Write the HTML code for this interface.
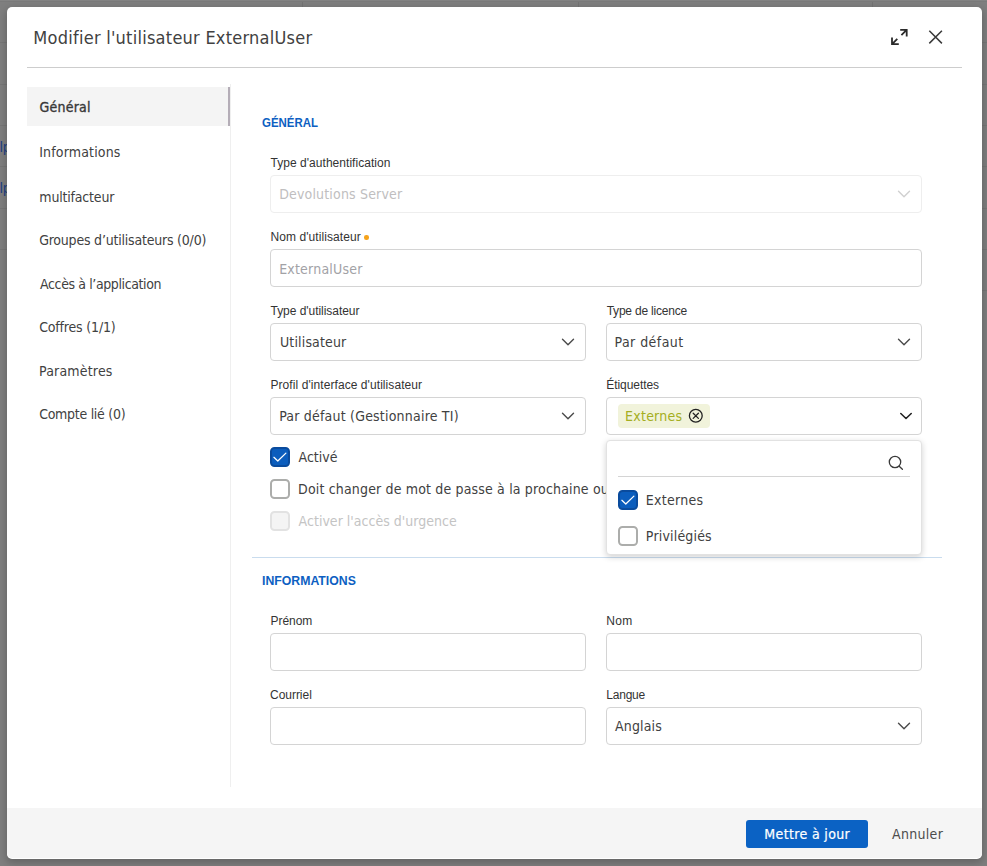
<!DOCTYPE html>
<html lang="fr"><head><meta charset="utf-8"><title>Modifier l'utilisateur ExternalUser</title>
<style>
html,body{margin:0;padding:0}
body{width:987px;height:866px;position:relative;overflow:hidden;background:#7f7f7f;font-family:"Liberation Sans",sans-serif}
.a,.t,.in,.cb,.ln{position:absolute}
.t{white-space:nowrap;display:block}
.in{box-sizing:border-box;border:1px solid #d4d4d4;border-radius:4px;background:#fff}
.in.dis{border-color:#eeeeee}
.ln{background:#ccc}
.cb{width:20px;height:20px;box-sizing:border-box;border:2px solid #acadab;border-radius:4.5px;background:#fff}
.cb.on{border-color:#0a4b9d;background:#0b5dbd}
.cb.on svg{position:absolute;left:-2px;top:-2px}
.cb.dis{border-color:#e2e2e2;background:#f4f4f4}
#modal{position:absolute;left:7px;top:7px;width:975px;height:852px;background:#fff;border-radius:5px;box-shadow:0 3px 9px 1px rgba(0,0,0,.22)}
#foot{position:absolute;left:7px;top:808px;width:975px;height:50px;background:#f5f5f5;border-radius:0 0 5px 5px}
#panel{position:absolute;left:606px;top:440px;width:316px;height:115px;box-sizing:border-box;background:#fff;border:1px solid #e2e2e2;border-radius:4px;box-shadow:0 2px 6px rgba(0,0,0,.18)}
#clip{position:absolute;left:0;top:470px;width:606px;height:40px;overflow:hidden}
</style></head><body>

<div class="ln" style="left:0;top:42px;width:987px;height:1px;background:#777"></div>
<div class="ln" style="left:0;top:84px;width:987px;height:1px;background:#777"></div>
<div class="ln" style="left:0;top:125px;width:987px;height:1px;background:#777"></div>
<div class="ln" style="left:0;top:166px;width:987px;height:1px;background:#777"></div>
<div class="ln" style="left:0;top:208px;width:987px;height:1px;background:#777"></div>
<div class="ln" style="left:0;top:249px;width:987px;height:1px;background:#777"></div>
<div class="ln" style="left:982px;top:290px;width:5px;height:1px;background:#777"></div>
<div class="ln" style="left:0;top:0;width:987px;height:1px;background:#838383"></div>
<div class="ln" style="left:0;top:1px;width:987px;height:1px;background:#7a7a7a"></div>
<div class="ln" style="left:302px;top:2px;width:1px;height:6px;background:#747474"></div>
<div class="ln" style="left:578px;top:2px;width:1px;height:6px;background:#747474"></div>
<div class="ln" style="left:872px;top:2px;width:1px;height:6px;background:#747474"></div>
<span class="t" style="left:-8px;top:137px;font-size:14px;line-height:20px;color:#1f3f82">elp</span>
<span class="t" style="left:-8px;top:178px;font-size:14px;line-height:20px;color:#1f3f82">elp</span>
<div id="modal"></div><div id="foot"></div>
<div class="ln" style="left:27px;top:67px;width:935px;height:1px;background:#cdcdcd"></div>
<svg class="a" style="left:889px;top:27px" width="20" height="20" viewBox="0 0 20 20" fill="none" stroke="#2b2b2b" stroke-width="1.8" stroke-linecap="butt" stroke-linejoin="miter">
<path d="M11.2 2.8 H17.7 V9.6 M17.4 3.1 L12.4 8.1 M3 10.4 V17.2 H9.8 M3.3 16.9 L8.3 11.9"/></svg>
<svg class="a" style="left:926px;top:27px" width="20" height="20" viewBox="0 0 20 20" fill="none" stroke="#3a3a3a" stroke-width="1.5" stroke-linecap="butt">
<path d="M3.3 3.8 L15.9 16.4 M15.9 3.8 L3.3 16.4"/></svg>
<div class="a" style="left:27px;top:87px;width:203px;height:39px;background:#f4f4f4;box-sizing:border-box;border-right:2px solid #b4adb7"></div>
<div class="ln" style="left:230px;top:84px;width:1px;height:703px;background:#efefef"></div>
<div class="in dis" style="left:270px;top:175px;width:652px;height:38px;"></div>
<div class="in" style="left:270px;top:249px;width:652px;height:38px;"></div>
<div class="in" style="left:270px;top:323px;width:316px;height:38px;"></div>
<div class="in" style="left:606px;top:323px;width:316px;height:38px;"></div>
<div class="in" style="left:270px;top:397px;width:316px;height:38px;"></div>
<div class="in" style="left:606px;top:397px;width:316px;height:38px;"></div>
<div class="in" style="left:270px;top:633px;width:316px;height:38px;"></div>
<div class="in" style="left:606px;top:633px;width:316px;height:38px;"></div>
<div class="in" style="left:270px;top:707px;width:316px;height:38px;"></div>
<div class="in" style="left:606px;top:707px;width:316px;height:38px;"></div>
<svg class="a" style="left:896px;top:186px" width="16" height="16" viewBox="0 0 16 16"><path d="M2.5 5.25 L8 10.75 L13.5 5.25" fill="none" stroke="#d0d0d0" stroke-width="1.4" stroke-linecap="round" stroke-linejoin="round"/></svg>
<svg class="a" style="left:560px;top:334px" width="16" height="16" viewBox="0 0 16 16"><path d="M2.5 5.25 L8 10.75 L13.5 5.25" fill="none" stroke="#4a4a4a" stroke-width="1.4" stroke-linecap="round" stroke-linejoin="round"/></svg>
<svg class="a" style="left:896px;top:334px" width="16" height="16" viewBox="0 0 16 16"><path d="M2.5 5.25 L8 10.75 L13.5 5.25" fill="none" stroke="#4a4a4a" stroke-width="1.4" stroke-linecap="round" stroke-linejoin="round"/></svg>
<svg class="a" style="left:560px;top:408px" width="16" height="16" viewBox="0 0 16 16"><path d="M2.5 5.25 L8 10.75 L13.5 5.25" fill="none" stroke="#4a4a4a" stroke-width="1.4" stroke-linecap="round" stroke-linejoin="round"/></svg>
<svg class="a" style="left:898px;top:408px" width="16" height="16" viewBox="0 0 16 16"><path d="M2.8 5.5 L8 10.5 L13.2 5.5" fill="none" stroke="#222" stroke-width="1.6" stroke-linecap="round" stroke-linejoin="round"/></svg>
<svg class="a" style="left:896px;top:718px" width="16" height="16" viewBox="0 0 16 16"><path d="M2.5 5.25 L8 10.75 L13.5 5.25" fill="none" stroke="#4a4a4a" stroke-width="1.4" stroke-linecap="round" stroke-linejoin="round"/></svg>
<div class="a" style="left:364px;top:235px;width:4.5px;height:4.5px;border-radius:50%;background:#f5a31c"></div>
<div class="a" style="left:618px;top:404px;width:92px;height:24px;border-radius:4px;background:#f1f3db"></div>
<svg class="a" style="left:688.3px;top:408.3px" width="16" height="16" viewBox="0 0 16 16" fill="none" stroke="#222" stroke-width="1.3" stroke-linecap="round">
<circle cx="7.8" cy="7.8" r="6.4"/><path d="M5.2 5.2 L10.4 10.4 M10.4 5.2 L5.2 10.4"/></svg>
<div class="cb on" style="left:270px;top:447px"><svg width="20" height="20" viewBox="0 0 20 20"><path d="M3.9 10.3 L7.8 14 L15.9 6.1" fill="none" stroke="#fff" stroke-width="1.25" stroke-linecap="round" stroke-linejoin="round"/></svg></div>
<div class="cb" style="left:270px;top:479px"></div>
<div class="cb dis" style="left:270px;top:511px"></div>
<div class="ln" style="left:252px;top:557px;width:690px;height:1px;background:#c9dcee"></div>
<div id="panel"></div>
<div class="ln" style="left:618px;top:476px;width:292px;height:1px;background:#d4d4d4"></div>
<svg class="a" style="left:887px;top:454px" width="18" height="18" viewBox="0 0 18 18" fill="none" stroke="#3a3a3a" stroke-width="1.3" stroke-linecap="round">
<circle cx="8" cy="8" r="5.7"/><path d="M12.2 12.2 L15.4 15.2"/></svg>
<div class="cb on" style="left:618px;top:490px"><svg width="20" height="20" viewBox="0 0 20 20"><path d="M3.9 10.3 L7.8 14 L15.9 6.1" fill="none" stroke="#fff" stroke-width="1.25" stroke-linecap="round" stroke-linejoin="round"/></svg></div>
<div class="cb" style="left:618px;top:526px"></div>
<div class="a" style="left:746px;top:820px;width:122px;height:28px;border-radius:3px;background:#0b62c4"></div>
<span class="t" id="title" style="left:33.36px;top:23.77px;font-size:18px;line-height:27px;color:#414141;font-family:'DejaVu Sans Condensed', 'DejaVu Sans', sans-serif;letter-spacing:0.244px;">Modifier l'utilisateur ExternalUser</span>
<span class="t" id="s0" style="left:39.60px;top:96.66px;font-size:14px;line-height:21px;color:#383838;font-family:'DejaVu Sans Condensed', 'DejaVu Sans', sans-serif;letter-spacing:0.210px;-webkit-text-stroke:0.35px #383838;">Général</span>
<span class="t" id="s1" style="left:39.25px;top:141.66px;font-size:14px;line-height:21px;color:#414141;font-family:'DejaVu Sans Condensed', 'DejaVu Sans', sans-serif;letter-spacing:0.155px;">Informations</span>
<span class="t" id="s2" style="left:39.37px;top:186.66px;font-size:14px;line-height:21px;color:#414141;font-family:'DejaVu Sans Condensed', 'DejaVu Sans', sans-serif;letter-spacing:-0.190px;">multifacteur</span>
<span class="t" id="s3" style="left:39.13px;top:229.66px;font-size:14px;line-height:21px;color:#414141;font-family:'DejaVu Sans Condensed', 'DejaVu Sans', sans-serif;letter-spacing:-0.207px;">Groupes d’utilisateurs (0/0)</span>
<span class="t" id="s4" style="left:40.10px;top:273.66px;font-size:14px;line-height:21px;color:#414141;font-family:'DejaVu Sans Condensed', 'DejaVu Sans', sans-serif;letter-spacing:-0.395px;">Accès à l’application</span>
<span class="t" id="s5" style="left:39.13px;top:316.66px;font-size:14px;line-height:21px;color:#414141;font-family:'DejaVu Sans Condensed', 'DejaVu Sans', sans-serif;letter-spacing:-0.171px;">Coffres (1/1)</span>
<span class="t" id="s6" style="left:39.04px;top:360.66px;font-size:14px;line-height:21px;color:#414141;font-family:'DejaVu Sans Condensed', 'DejaVu Sans', sans-serif;letter-spacing:0.185px;">Paramètres</span>
<span class="t" id="s7" style="left:39.13px;top:403.66px;font-size:14px;line-height:21px;color:#414141;font-family:'DejaVu Sans Condensed', 'DejaVu Sans', sans-serif;letter-spacing:-0.278px;">Compte lié (0)</span>
<span class="t" id="h1" style="left:262.00px;top:112.50px;font-size:13px;line-height:20px;color:#0d5fc2;font-family:'Liberation Sans', sans-serif;font-weight:700;transform:scaleX(0.8801);transform-origin:0 0;">GÉNÉRAL</span>
<span class="t" id="h2" style="left:262.00px;top:570.50px;font-size:13px;line-height:20px;color:#0d5fc2;font-family:'Liberation Sans', sans-serif;font-weight:700;transform:scaleX(0.9443);transform-origin:0 0;">INFORMATIONS</span>
<span class="t" id="l0" style="left:270.55px;top:153.84px;font-size:12px;line-height:18px;color:#333;font-family:'Liberation Sans', sans-serif;letter-spacing:0.036px;">Type d'authentification</span>
<span class="t" id="l1" style="left:270.45px;top:227.84px;font-size:12px;line-height:18px;color:#333;font-family:'Liberation Sans', sans-serif;letter-spacing:0.076px;">Nom d'utilisateur</span>
<span class="t" id="l2" style="left:270.52px;top:301.84px;font-size:12px;line-height:18px;color:#333;font-family:'Liberation Sans', sans-serif;letter-spacing:-0.041px;">Type d'utilisateur</span>
<span class="t" id="l3" style="left:270.45px;top:375.84px;font-size:12px;line-height:18px;color:#333;font-family:'Liberation Sans', sans-serif;letter-spacing:0.075px;">Profil d'interface d'utilisateur</span>
<span class="t" id="l4" style="left:606.63px;top:301.84px;font-size:12px;line-height:18px;color:#333;font-family:'Liberation Sans', sans-serif;letter-spacing:-0.204px;">Type de licence</span>
<span class="t" id="l5" style="left:606.30px;top:375.84px;font-size:12px;line-height:18px;color:#333;font-family:'Liberation Sans', sans-serif;letter-spacing:-0.068px;">Étiquettes</span>
<span class="t" id="l6" style="left:270.45px;top:611.84px;font-size:12px;line-height:18px;color:#333;font-family:'Liberation Sans', sans-serif;letter-spacing:-0.020px;">Prénom</span>
<span class="t" id="l7" style="left:270.07px;top:685.84px;font-size:12px;line-height:18px;color:#333;font-family:'Liberation Sans', sans-serif;letter-spacing:-0.039px;">Courriel</span>
<span class="t" id="l8" style="left:606.30px;top:611.84px;font-size:12px;line-height:18px;color:#333;font-family:'Liberation Sans', sans-serif;letter-spacing:0.287px;">Nom</span>
<span class="t" id="l9" style="left:606.30px;top:685.84px;font-size:12px;line-height:18px;color:#333;font-family:'Liberation Sans', sans-serif;letter-spacing:-0.230px;">Langue</span>
<span class="t" id="v0" style="left:279.14px;top:183.66px;font-size:14px;line-height:21px;color:#c0bec0;font-family:'DejaVu Sans Condensed', 'DejaVu Sans', sans-serif;letter-spacing:0.172px;">Devolutions Server</span>
<span class="t" id="v1" style="left:279.14px;top:258.66px;font-size:14px;line-height:21px;color:#a2a2a6;font-family:'DejaVu Sans Condensed', 'DejaVu Sans', sans-serif;letter-spacing:0.214px;">ExternalUser</span>
<span class="t" id="v2" style="left:279.98px;top:331.66px;font-size:14px;line-height:21px;color:#414141;font-family:'DejaVu Sans Condensed', 'DejaVu Sans', sans-serif;letter-spacing:0.151px;">Utilisateur</span>
<span class="t" id="v3" style="left:279.14px;top:405.66px;font-size:14px;line-height:21px;color:#414141;font-family:'DejaVu Sans Condensed', 'DejaVu Sans', sans-serif;letter-spacing:0.205px;">Par défaut (Gestionnaire TI)</span>
<span class="t" id="v4" style="left:614.56px;top:331.66px;font-size:14px;line-height:21px;color:#414141;font-family:'DejaVu Sans Condensed', 'DejaVu Sans', sans-serif;letter-spacing:0.440px;">Par défaut</span>
<span class="t" id="v5" style="left:625.08px;top:405.66px;font-size:14px;line-height:21px;color:#a4ae22;font-family:'DejaVu Sans Condensed', 'DejaVu Sans', sans-serif;letter-spacing:0.237px;">Externes</span>
<span class="t" id="v6" style="left:615.10px;top:715.66px;font-size:14px;line-height:21px;color:#414141;font-family:'DejaVu Sans Condensed', 'DejaVu Sans', sans-serif;letter-spacing:0.140px;">Anglais</span>
<span class="t" id="c0" style="left:298.61px;top:446.66px;font-size:14px;line-height:21px;color:#414141;font-family:'DejaVu Sans Condensed', 'DejaVu Sans', sans-serif;letter-spacing:-0.027px;">Activé</span>
<div id="clip">
<span class="t" id="c1" style="left:298.12px;top:8.66px;font-size:14px;line-height:21px;color:#414141;font-family:'DejaVu Sans Condensed', 'DejaVu Sans', sans-serif;letter-spacing:0.160px;">Doit changer de mot de passe à la prochaine ou</span>
</div>
<span class="t" id="c2" style="left:298.61px;top:510.66px;font-size:14px;line-height:21px;color:#c4c4c4;font-family:'DejaVu Sans Condensed', 'DejaVu Sans', sans-serif;letter-spacing:0.016px;">Activer l'accès d'urgence</span>
<span class="t" id="d0" style="left:645.87px;top:489.66px;font-size:14px;line-height:21px;color:#414141;font-family:'DejaVu Sans Condensed', 'DejaVu Sans', sans-serif;letter-spacing:0.285px;">Externes</span>
<span class="t" id="d1" style="left:645.87px;top:525.66px;font-size:14px;line-height:21px;color:#414141;font-family:'DejaVu Sans Condensed', 'DejaVu Sans', sans-serif;letter-spacing:0.178px;">Privilégiés</span>
<span class="t" id="b0" style="left:764.34px;top:823.66px;font-size:14px;line-height:21px;color:#fff;font-family:'DejaVu Sans Condensed', 'DejaVu Sans', sans-serif;letter-spacing:0.354px;-webkit-text-stroke:0.2px #fff;">Mettre à jour</span>
<span class="t" id="b1" style="left:892.10px;top:823.66px;font-size:14px;line-height:21px;color:#4c4c4c;font-family:'DejaVu Sans Condensed', 'DejaVu Sans', sans-serif;letter-spacing:0.286px;">Annuler</span>

</body></html>
